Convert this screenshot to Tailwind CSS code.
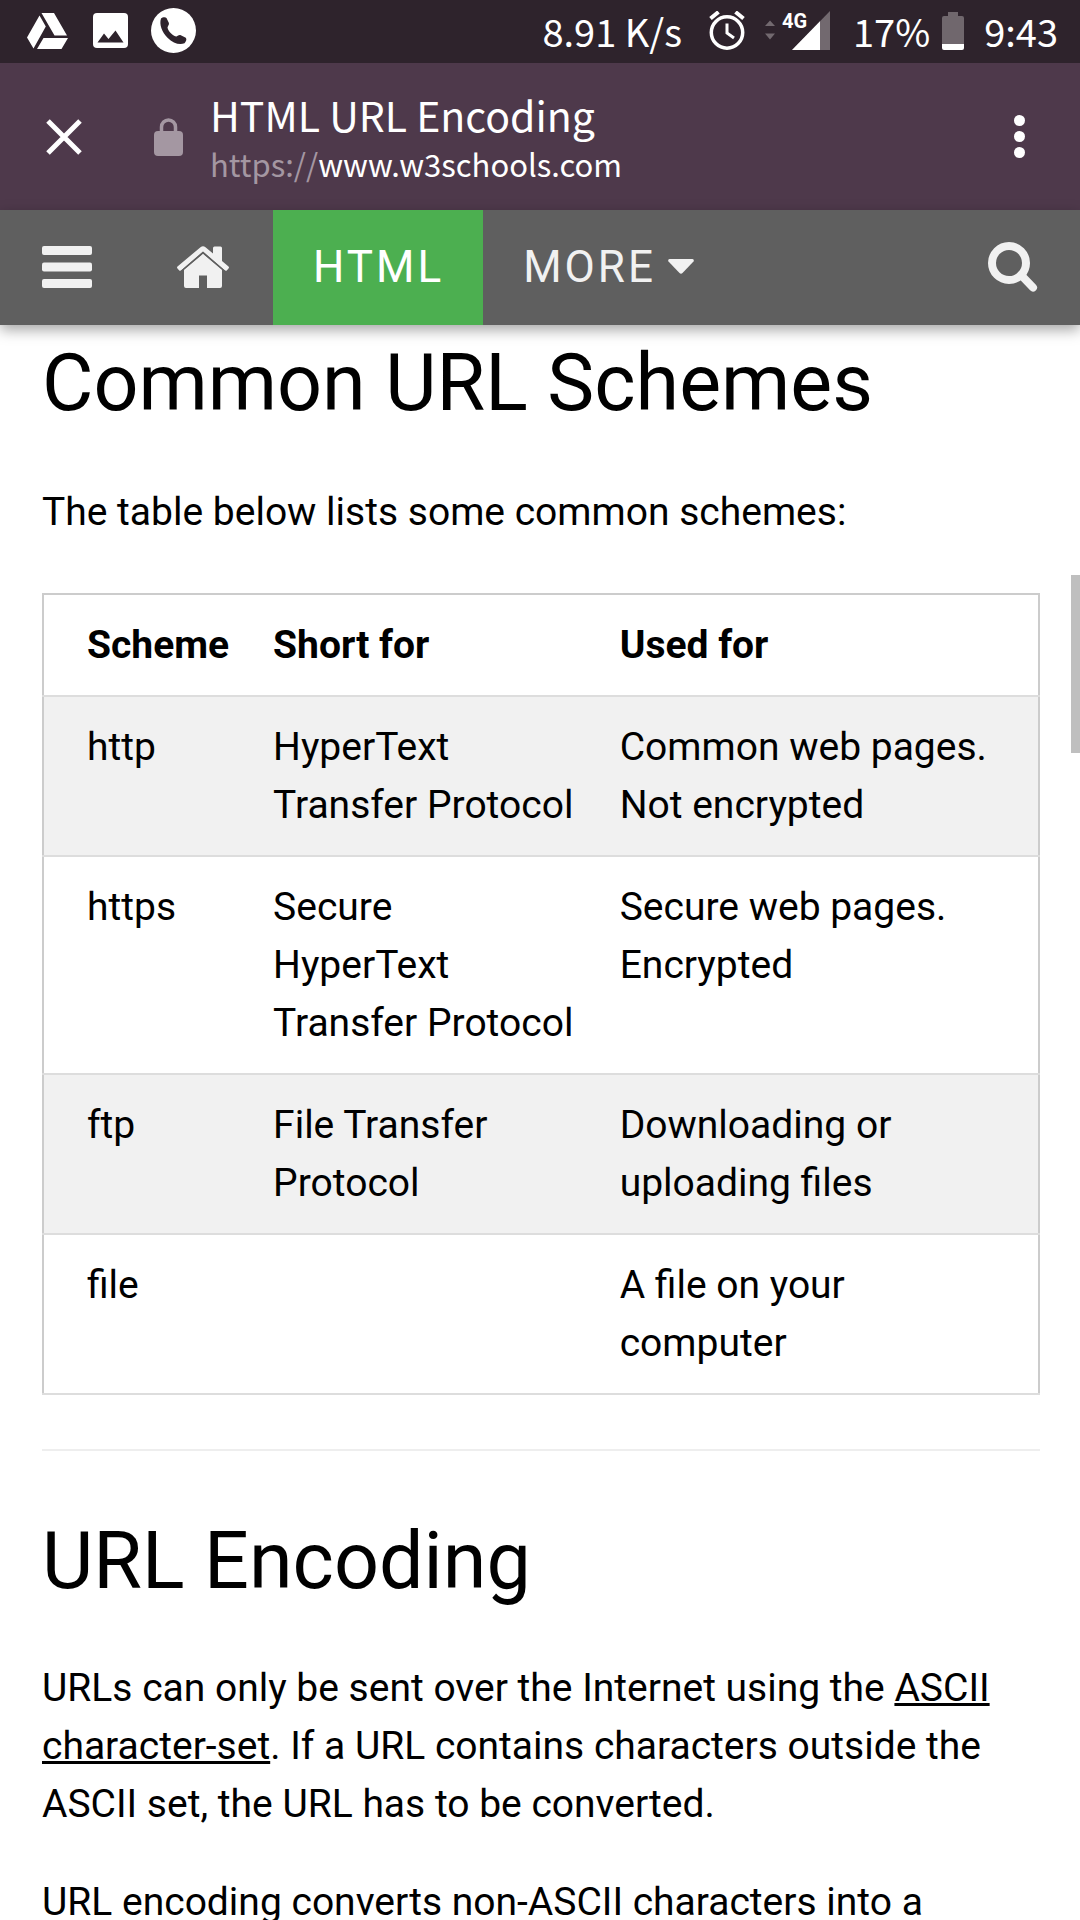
<!DOCTYPE html>
<html lang="en">
<head>
<meta charset="utf-8">
<meta name="viewport" content="width=device-width, initial-scale=1">
<title>HTML URL Encoding</title>
<script src="https://cdn.jsdelivr.net/npm/@tailwindcss/browser@4"></script>
</head>
<body class="bg-white text-black">
<div class="relative flex h-screen flex-col overflow-hidden font-['Roboto',sans-serif]">

  <!-- Phone status bar -->
  <div class="flex h-[63px] shrink-0 items-center justify-between bg-[#2e232c] pr-[22px] pb-[2px] pl-[27px] font-['Noto_Sans_CJK_SC',sans-serif] text-[38px] leading-[60px] text-white">
    <div class="flex items-center">
      <svg class="h-9 w-[41px]" viewBox="0 0 41 36" fill="#fff" aria-hidden="true"><path d="M14.500 0h12.500L40 22.500H27.500zM12.500 2.500L18.800 13.500 6.500 35.500 0 24.500zM16.500 25H41l-6.500 11H10z"/></svg>
      <svg class="ml-[25px] h-[35px] w-[35px]" viewBox="0 0 35 35" aria-hidden="true"><rect width="35" height="35" rx="4" fill="#fff"/><path d="M4.500 29.500l6.500-9 4.500 5.500L22.500 17.500l8 12z" fill="#2e232c"/></svg>
      <svg class="ml-[23px] h-[45px] w-[45px]" viewBox="0 0 45 45" aria-hidden="true"><circle cx="22.500" cy="22.500" r="22.500" fill="#fff"/><path d="M10 10.500c1.500-1.500 4.500-1.800 5.500-.5l2.300 4.800c.8 2-.9 2.700-1.300 4.700.6 4 5.500 8.500 9 9 1.500-.8 2.500-2 4.300-1.300l5 2.500c1.200 1.200.4 3.800-1.300 5.500-5 2.200-11.500-.2-17-5.500-5.500-5.300-8.500-13.500-6.500-19.200z" fill="#2e232c"/></svg>
    </div>
    <div class="flex items-center">
      <span>8.91 K/s</span>
      <svg class="ml-[27px] h-[39px] w-9" viewBox="0 0 36 39" fill="none" stroke="#fff" aria-hidden="true"><circle cx="18" cy="21.500" r="15.700" stroke-width="3.500"/><path d="M18 12.500V22l7 5" stroke-width="3"/><path d="M1.500 7.500l8-6.500M34.500 7.500L26.500 1" stroke-width="4"/></svg>
      <svg class="ml-5 h-[39px] w-[66px]" viewBox="0 0 66 39" aria-hidden="true"><path d="M0 15l5-5.500L10 15zM0 22.500h10L5 28.500z" fill="#72696f"/><path d="M65 0v39H27z" fill="#72696f"/><path d="M55 10.300V39H27z" fill="#fff"/><text x="17" y="17" font-family="Roboto, sans-serif" font-weight="700" font-size="20" fill="#fff">4G</text></svg>
      <span class="ml-[22px]">17%</span>
      <svg class="ml-3 h-[38px] w-[22px]" viewBox="0 0 22 38" aria-hidden="true"><path d="M6 0h10v4h4a2 2 0 0 1 2 2v28H0V6a2 2 0 0 1 2-2h4z" fill="#70676d"/><path d="M0 32h22v4a2 2 0 0 1-2 2H2a2 2 0 0 1-2-2z" fill="#fff"/></svg>
      <span class="ml-5">9:43</span>
    </div>
  </div>

  <!-- Browser toolbar -->
  <header class="flex h-[147px] shrink-0 items-center bg-[#4e394b] pr-11 pl-[46px] font-['Noto_Sans_CJK_SC',sans-serif] text-white">
    <button type="button" aria-label="Close"><svg class="h-9 w-9" viewBox="0 0 36 36" stroke="#fff" stroke-width="5" aria-hidden="true"><path d="M2 2l32 32M34 2L2 34"/></svg></button>
    <svg class="ml-[72px] h-[38px] w-[29px]" viewBox="0 0 29 38" aria-hidden="true"><rect y="13" width="29" height="25" rx="4" fill="#a497a2"/><path d="M7.500 14V9a7 7 0 0 1 14 0v5" fill="none" stroke="#a497a2" stroke-width="3.500"/></svg>
    <div class="ml-[27px] flex-1 pt-[5px]">
      <div class="text-[41px] leading-[49px]">HTML URL Encoding</div>
      <div class="text-[31px] leading-[49px]"><span class="text-[#a497a2]">https://</span>www.w3schools.com</div>
    </div>
    <button type="button" aria-label="More options" class="flex w-[34px] justify-center"><svg class="h-[43px] w-[11px]" viewBox="0 0 11 43" fill="#fff" aria-hidden="true"><circle cx="5.500" cy="5.500" r="5.500"/><circle cx="5.500" cy="21.500" r="5.500"/><circle cx="5.500" cy="37.500" r="5.500"/></svg></button>
  </header>

  <!-- Site navigation -->
  <nav class="z-10 flex h-[115px] shrink-0 items-stretch bg-[#5f5f5f] text-[44px] tracking-[3px] text-[#f1f1f1] shadow-[0_5px_13px_rgba(0,0,0,0.35)]">
    <a href="#" aria-label="Menu" class="flex items-center px-[42px] pb-[2px]"><svg class="h-[42px] w-[50px]" viewBox="0 0 50 42" fill="#f1f1f1" aria-hidden="true"><rect width="50" height="9" rx="2"/><rect y="16.500" width="50" height="9" rx="2"/><rect y="33" width="50" height="9" rx="2"/></svg></a>
    <a href="#" aria-label="Home" class="flex items-center pr-11 pb-[2px] pl-[43px]"><svg class="h-[42px] w-[52px]" viewBox="0 0 52 42" fill="#f1f1f1" aria-hidden="true"><path d="M26 7.500L45 23.500V40a2 2 0 0 1-2 2H30V29.500h-8V42H9a2 2 0 0 1-2-2V23.500z"/><path d="M23.500 1.200a4 4 0 0 1 5 0L36 7.500V2q0-1.500 1.500-1.500h6Q45 .500 45 2v13l6.500 5.500q1 1 0 2l-1.500 1.800q-1 1-2 .2L26 5.500 4 24.500q-1 .8-2-.2L.5 22.500q-1-1 0-2z"/><path d="M4 25.500L26 6.800 48 25.500" fill="none" stroke="#5f5f5f" stroke-width="1.500"/></svg></a>
    <a href="#" class="flex items-center bg-[#4caf50] pr-[39px] pb-[2px] pl-10 text-white">HTML</a>
    <a href="#" class="flex items-center px-10 pb-[2px]">MORE<svg class="ml-3 h-[15px] w-[26px]" viewBox="0 0 26 15" fill="#f1f1f1" aria-hidden="true"><path d="M1.500 0h23q2 .5 1 2.500L14.500 14q-1.500 1.500-3 0L.5 2.500Q-.5.5 1.500 0z"/></svg></a>
    <a href="#" aria-label="Search" class="ml-auto flex items-center px-[42px] pb-[2px]"><svg class="h-[50px] w-[50px]" viewBox="0 0 50 50" fill="none" stroke="#f1f1f1" aria-hidden="true"><circle cx="21" cy="21" r="17" stroke-width="8"/><path d="M33 33l12 12.500" stroke-width="8" stroke-linecap="round"/></svg></a>
  </nav>

  <main class="min-h-0 flex-1 overflow-hidden pr-10 pl-[42px] text-[39px] leading-[58px]">
    <h2 class="text-[79px] leading-[116px]">Common URL Schemes</h2>
    <p class="mt-[42px]">The table below lists some common schemes:</p>

    <table class="mt-[52px] w-full border-collapse border-2 border-[#ccc] text-left align-top">
      <thead>
        <tr class="border-b-2 border-[#ddd]">
          <th class="w-[21%] py-[21px] pr-6 pl-[43px] font-bold">Scheme</th>
          <th class="w-[35%] py-[21px] pr-[26px] pl-5 font-bold">Short for</th>
          <th class="py-[21px] pr-6 pl-[18px] font-bold">Used for</th>
        </tr>
      </thead>
      <tbody class="align-top">
        <tr class="border-b-2 border-[#ddd] bg-[#f1f1f1]">
          <td class="py-[21px] pr-6 pl-[43px]">http</td>
          <td class="py-[21px] pr-[26px] pl-5">HyperText Transfer Protocol</td>
          <td class="py-[21px] pr-6 pl-[18px]">Common web pages. Not encrypted</td>
        </tr>
        <tr class="border-b-2 border-[#ddd]">
          <td class="py-[21px] pr-6 pl-[43px]">https</td>
          <td class="py-[21px] pr-[26px] pl-5">Secure HyperText Transfer Protocol</td>
          <td class="py-[21px] pr-6 pl-[18px]">Secure web pages. Encrypted</td>
        </tr>
        <tr class="border-b-2 border-[#ddd] bg-[#f1f1f1]">
          <td class="py-[21px] pr-6 pl-[43px]">ftp</td>
          <td class="py-[21px] pr-[26px] pl-5">File Transfer Protocol</td>
          <td class="py-[21px] pr-6 pl-[18px]">Downloading or uploading files</td>
        </tr>
        <tr class="border-b-2 border-[#ddd]">
          <td class="py-[21px] pr-6 pl-[43px]">file</td>
          <td class="py-[21px] pr-[26px] pl-5"></td>
          <td class="py-[21px] pr-6 pl-[18px]">A file on your computer</td>
        </tr>
      </tbody>
    </table>

    <hr class="mt-[54px] mb-[52px] border-t-2 border-[#eee]">

    <h2 class="text-[79px] leading-[116px]">URL Encoding</h2>
    <p class="mt-10">URLs can only be sent over the Internet using the <a href="#" class="underline">ASCII character-set</a>. If a URL contains characters outside the ASCII set, the URL has to be converted.</p>
    <p class="mt-10">URL encoding converts non-ASCII characters into a</p>
  </main>

  <!-- Overlay scroll indicator -->
  <div class="absolute top-[575px] right-0 h-[178px] w-[9px] bg-[#bfbfbf]"></div>
</div>
</body>
</html>
